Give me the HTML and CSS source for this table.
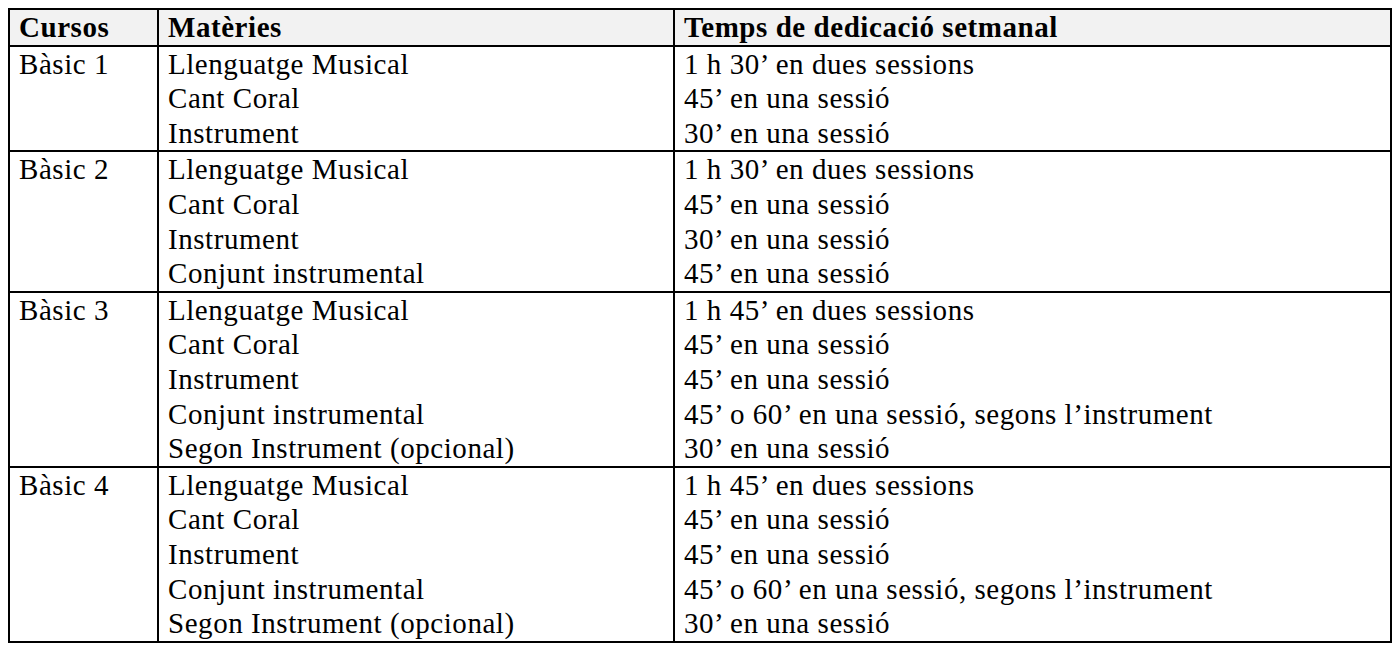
FILE: index.html
```html
<!DOCTYPE html>
<html lang="ca">
<head>
<meta charset="utf-8">
<title>Cursos</title>
<link rel="stylesheet" href="styles.css">
</head>
<body>
<table class="plan">
  <colgroup>
    <col class="c1"><col class="c2"><col class="c3">
  </colgroup>
  <thead>
    <tr><th>Cursos</th><th>Matèries</th><th>Temps de dedicació setmanal</th></tr>
  </thead>
  <tbody>
    <tr>
      <td>Bàsic 1</td>
      <td><div>Llenguatge Musical</div><div>Cant Coral</div><div>Instrument</div></td>
      <td><div>1 h 30’ en dues sessions</div><div>45’ en una sessió</div><div>30’ en una sessió</div></td>
    </tr>
    <tr>
      <td>Bàsic 2</td>
      <td><div>Llenguatge Musical</div><div>Cant Coral</div><div>Instrument</div><div>Conjunt instrumental</div></td>
      <td><div>1 h 30’ en dues sessions</div><div>45’ en una sessió</div><div>30’ en una sessió</div><div>45’ en una sessió</div></td>
    </tr>
    <tr>
      <td>Bàsic 3</td>
      <td><div>Llenguatge Musical</div><div>Cant Coral</div><div>Instrument</div><div>Conjunt instrumental</div><div>Segon Instrument (opcional)</div></td>
      <td><div>1 h 45’ en dues sessions</div><div>45’ en una sessió</div><div>45’ en una sessió</div><div>45’ o 60’ en una sessió, segons l’instrument</div><div>30’ en una sessió</div></td>
    </tr>
    <tr>
      <td>Bàsic 4</td>
      <td><div>Llenguatge Musical</div><div>Cant Coral</div><div>Instrument</div><div>Conjunt instrumental</div><div>Segon Instrument (opcional)</div></td>
      <td><div>1 h 45’ en dues sessions</div><div>45’ en una sessió</div><div>45’ en una sessió</div><div>45’ o 60’ en una sessió, segons l’instrument</div><div>30’ en una sessió</div></td>
    </tr>
  </tbody>
</table>
</body>
</html>
```
FILE: styles.css
```css
html, body {
  margin: 0;
  padding: 0;
  background: #ffffff;
}
body {
  padding: 8px 0 0 8px;
  font-family: "Liberation Serif", "Times New Roman", serif;
  color: #000;
}
.plan {
  border-collapse: collapse;
  width: 1382px;
  table-layout: fixed;
  font-size: 29px;
  letter-spacing: 0.55px;
  line-height: 34.6px;
}
.c1 { width: 149px; }
.c2 { width: 516px; }
.c3 { width: 717px; }
.plan th, .plan td {
  border: 2px solid #000;
  padding: 0 9px;
  text-align: left;
  vertical-align: top;
}
.plan th {
  background: #f2f2f2;
  font-weight: bold;
}
```
